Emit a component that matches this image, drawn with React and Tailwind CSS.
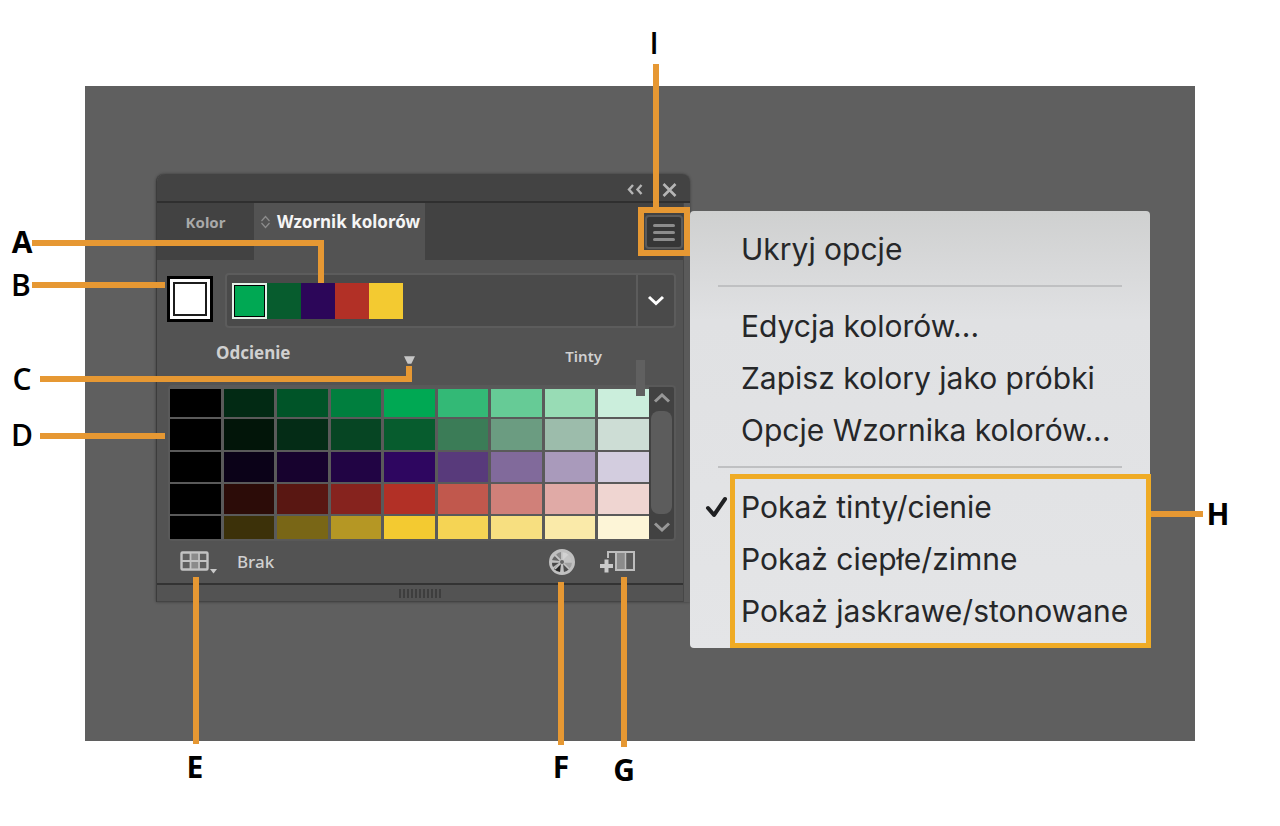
import React, { useState } from 'react';

const harmony = ['#00a853', '#075c2e', '#2c0659', '#b23026', '#f3ca31'];

const shades = [
  ['#000000', '#022a14', '#005428', '#007f3e', '#00a853', '#33b976', '#66cb96', '#98dcb5', '#cbeedc'],
  ['#000000', '#021509', '#042c16', '#064523', '#075c2e', '#3b7c57', '#6b9c81', '#9cbcab', '#cdddd5'],
  ['#000000', '#0b0218', '#17022e', '#210444', '#2e0660', '#583a7b', '#816a9b', '#a99abb', '#d3cddf'],
  ['#000000', '#2c0c08', '#591712', '#86231e', '#b23026', '#c1584d', '#d08079', '#e0aaa6', '#efd5d1'],
  ['#000000', '#3c3109', '#796616', '#b59724', '#f3ca31', '#f5d454', '#f7df80', '#faeaa9', '#fdf5d7'],
];

const menuGroups = [
  ['Ukryj opcje'],
  ['Edycja kolorów...', 'Zapisz kolory jako próbki', 'Opcje Wzornika kolorów...'],
  ['Pokaż tinty/cienie', 'Pokaż ciepłe/zimne', 'Pokaż jaskrawe/stonowane'],
];

const Chevron = ({ up }) => (
  <svg width="18" height="10" viewBox="0 0 18 10" fill="none" stroke="#989898" strokeWidth="3">
    <path d={up ? 'M2 8.5 9 2l7 6.5' : 'M2 1.5 9 8l7-6.5'} />
  </svg>
);

const WheelIcon = () => (
  <svg width="28" height="28" viewBox="0 0 28 28">
    <circle cx="14" cy="14" r="11.5" fill="#b4b4b4" stroke="#c0c0c0" strokeWidth="3" />
    <path d="M14 14 14 4A10 10 0 0 1 21 7Z" fill="#d2d2d2" />
    <path d="M14 14 21 7A10 10 0 0 1 24 14Z" fill="#c4c4c4" />
    <path d="M14 14 24 14A10 10 0 0 1 21 21Z" fill="#a2a2a2" />
    <path d="M15 15 21 21A10 10 0 0 1 16 24Z" fill="#4e4e4e" />
    <path d="M13 15 12 24A10 10 0 0 1 6 21Z" fill="#262626" />
    <path d="M12 14 5 19A10 10 0 0 1 4 14Z" fill="#484848" />
    <path d="M12 13 4 12A10 10 0 0 1 7 8Z" fill="#666" />
    <path d="M13 12 8 7A10 10 0 0 1 13 4Z" fill="#8a8a8a" />
    <path d="M14 4v20M4 14h20M7 7l14 14M21 7 7 21" stroke="#c4c4c4" strokeWidth="1.5" />
    <circle cx="14" cy="14" r="2" fill="#666" />
  </svg>
);

const GridIcon = () => (
  <svg width="38" height="23" viewBox="0 0 38 23">
    <rect x="1.5" y="1.5" width="26" height="17" rx="1" fill="#5f5f5f" stroke="#c3c3c3" strokeWidth="2.4" />
    <rect x="11" y="3" width="7" height="14" fill="#8b8b8b" />
    <path d="M10.5 2v16M19 2v16M2 10h26" stroke="#c3c3c3" strokeWidth="1.8" />
    <path d="M30 18h7l-3.500 4.500z" fill="#c9c9c9" />
  </svg>
);

const SaveGroupIcon = () => (
  <svg width="36" height="24" viewBox="0 0 36 24" fill="none">
    <path d="M8 8V2h8" stroke="#bdbdbd" strokeWidth="2" />
    <rect x="16" y="2" width="18" height="18" fill="#5a5a5a" stroke="#bdbdbd" strokeWidth="2" />
    <rect x="17" y="3" width="8" height="16" fill="#8b8b8b" />
    <path d="M25.5 2v18" stroke="#bdbdbd" strokeWidth="1.5" />
    <path d="M6.500 9.500v13M0 16h13" stroke="#cacaca" strokeWidth="4" />
  </svg>
);

const Panel = () => (
  <section className="w-[534px] shrink-0 rounded-t-lg bg-[#5a5a5a] border-l border-[#3c3c3c] shadow-[0_0_3px_rgba(0,0,0,0.4)]">
    {/* Title bar */}
    <div className="h-[29px] rounded-t-lg bg-[#434343] border-b-2 border-[#2f2f2f] flex items-center justify-end gap-[19px] pr-[13px] pt-1">
      <button aria-label="Zwiń">
        <svg width="17" height="11" viewBox="0 0 17 11" fill="none" stroke="#b5b5b5" strokeWidth="2.4"><path d="M7 1 3 5.500 7 10M15.500 1l-4 4.500 4 4.500" /></svg>
      </button>
      <button aria-label="Zamknij">
        <svg width="15" height="14" viewBox="0 0 15 14" fill="none" stroke="#b5b5b5" strokeWidth="2.6"><path d="m1.500 1 12 12M13.500 1l-12 12" /></svg>
      </button>
    </div>

    <div className="mr-[6px] bg-[#535353] border-r border-[#474747]">
      {/* Tabs */}
      <div role="tablist" className="h-[57px] flex bg-[#424242]">
        <button role="tab" aria-selected="false" className="w-[97px] pb-5 text-[15px] leading-6 font-bold text-[#a9a9a9]">Kolor</button>
        <button role="tab" aria-selected="true" className="w-[171px] bg-[#535353] pb-5 pl-[6px] flex items-center gap-[6px] text-[17px] leading-6 font-bold text-[#f5f5f5] whitespace-nowrap">
          <svg className="shrink-0" width="11" height="14" viewBox="0 0 11 14" fill="none" stroke="#8d8d8d" strokeWidth="1.200"><path d="m1.500 6 4-4.500 4 4.500M1.500 8l4 4.500 4-4.500" /></svg>
          Wzornik kolorów
        </button>
        <button aria-label="Menu panelu" className="ml-auto mt-[12px] w-[38px] h-[34px] rounded border-2 border-[#5b5b5b] bg-[#363636] flex flex-col items-center justify-center gap-1">
          <span className="w-[22px] h-[3px] rounded-sm bg-[#8c8c8c]" />
          <span className="w-[22px] h-[3px] rounded-sm bg-[#8c8c8c]" />
          <span className="w-[22px] h-[3px] rounded-sm bg-[#8c8c8c]" />
        </button>
      </div>

      {/* Base colour and harmony */}
      <div className="pt-[13px] pl-[10px] pr-[7px] flex gap-3">
        <button aria-label="Kolor bazowy" className="mt-[3px] size-[46px] border-[3px] border-black bg-white p-[3px]">
          <span className="block size-full border-2 border-[#1c1c1c] bg-white" />
        </button>
        <div className="flex-1 h-[55px] flex border-2 border-[#5c5c5c] rounded bg-[#4a4a4a]">
          <div className="flex-1 flex items-center pl-[5px]">
            {harmony.map((c, i) => (
              <button
                key={c}
                aria-label={`Kolor ${i + 1}`}
                className={i === 0 ? 'w-[35px] h-9 border-2 border-[#e5f2e8] ring-1 ring-inset ring-black' : 'w-[34px] h-9'}
                style={{ backgroundColor: c }}
              />
            ))}
          </div>
          <button aria-label="Reguły harmonii" className="w-[38px] border-l-2 border-[#5c5c5c] flex items-center justify-center">
            <svg width="18" height="11" viewBox="0 0 18 11" fill="none" stroke="#fff" strokeWidth="3"><path d="m2 2 7 6.500L16 2" /></svg>
          </button>
        </div>
      </div>

      {/* Range labels */}
      <div className="relative h-[57px] pl-[59px] pr-[81px] pt-[13px] flex items-start text-[#d0d0d0]">
        <span className="w-[188px] text-[17px] leading-6 font-bold">Odcienie</span>
        <svg className="mt-[15px]" width="11" height="8" viewBox="0 0 12 8"><path d="M0 0h12L8 8H4z" fill="#c6c6c6" /></svg>
        <span className="ml-auto mt-[5px] text-[15px] leading-5 font-semibold">Tinty</span>
        <span className="absolute z-10 left-[479px] top-[32px] w-[9px] h-[36px] bg-[#606060]" />
      </div>

      {/* Shades and tints */}
      <div className="ml-[11px] mr-[7px] flex rounded border-2 border-[#595959] bg-[#424242]">
        <div className="flex-1 grid grid-cols-9 grid-rows-[28px_31px_30px_30px_23px] gap-x-[3px] gap-y-[2px] pt-[2px] bg-[#5a5a5a]">
          {shades.flat().map((c, i) => (
            <button key={i} aria-label={`Próbka ${c}`} style={{ backgroundColor: c }} />
          ))}
        </div>
        <div className="w-[25px] flex flex-col items-center justify-between pt-[3px] pb-1">
          <button aria-label="W górę" className="h-4"><Chevron up /></button>
          <span className="w-[21px] h-[103px] rounded-lg bg-[#5c5c5c]" />
          <button aria-label="W dół" className="h-4"><Chevron /></button>
        </div>
      </div>

      {/* Footer */}
      <div className="h-[42px] pl-[23px] pr-[47px] flex items-center">
        <button aria-label="Ogranicz do biblioteki próbek"><GridIcon /></button>
        <span className="ml-[19px] text-[17px] leading-6 font-medium text-[#d0d0d0]">Brak</span>
        <button aria-label="Edytuj kolory" className="ml-auto"><WheelIcon /></button>
        <button aria-label="Zapisz grupę kolorów" className="ml-6"><SaveGroupIcon /></button>
      </div>
      <div className="h-[19px] border-t-2 border-[#333] border-b border-b-[#444] flex items-center justify-center gap-[2px]">
        {Array.from({ length: 11 }, (_, i) => (
          <span key={i} className="w-[2px] h-[9px] bg-[#3e3e3e]" />
        ))}
      </div>
    </div>
  </section>
);

const PanelMenu = () => {
  const [checked, setChecked] = useState('Pokaż tinty/cienie');

  return (
    <div role="menu" className="w-[460px] shrink-0 mt-[37px] pt-3 pb-[11px] rounded-sm bg-linear-to-b from-[#cfd0d0] from-0% via-[#e0e1e3] via-25% to-[#e4e5e7] font-[Inter,sans-serif] text-[30px] text-[#262729]">
      {menuGroups.map((group, g) => (
        <div key={g} className={g > 0 ? 'mt-[10px]' : ''}>
          {g > 0 && <hr className="mx-7 mb-[13px] border-t-2 border-[#bfc0c2]" />}
          {group.map((label) => (
            <button key={label} role="menuitem" onClick={() => g === 2 && setChecked(label)} className="w-full h-[52px] pl-[15px] flex items-center whitespace-nowrap">
              <span className="w-9 shrink-0">
                {checked === label && (
                  <svg width="24" height="24" viewBox="0 0 24 24" fill="none" stroke="#1f2022" strokeWidth="4" strokeLinecap="round" strokeLinejoin="round"><path d="m3 13 6 7L20 4" /></svg>
                )}
              </span>
              {label}
            </button>
          ))}
        </div>
      ))}
    </div>
  );
};

// Callouts lie over the whole figure
const lines = [
  'left-[32px] top-[240px] w-[292px] h-[6px]',
  'left-[318px] top-[240px] w-[6px] h-[43px]',
  'left-[32px] top-[282px] w-[133px] h-[6px]',
  'left-[40px] top-[376px] w-[372px] h-[6px]',
  'left-[406px] top-[366px] w-[6px] h-[16px]',
  'left-[40px] top-[433px] w-[125px] h-[6px]',
  'left-[193px] top-[577px] w-[6px] h-[167px]',
  'left-[558px] top-[582px] w-[6px] h-[163px]',
  'left-[621px] top-[577px] w-[6px] h-[170px]',
  'left-[653px] top-[64px] w-[6px] h-[145px]',
  'left-[1150px] top-[511px] w-[53px] h-[6px]',
];

const letters = [
  ['A', 'left-[6px] top-[226px] font-bold'],
  ['B', 'left-[5px] top-[269px] font-semibold'],
  ['C', 'left-[6px] top-[363px] font-semibold'],
  ['D', 'left-[6px] top-[419px] font-semibold'],
  ['E', 'left-[179px] top-[751px] font-bold'],
  ['F', 'left-[545px] top-[751px] font-bold'],
  ['G', 'left-[608px] top-[754px] font-bold'],
  ['H', 'left-[1202px] top-[498px] font-bold'],
  ['I', 'left-[638px] top-[27px] font-semibold'],
];

const Callouts = () => (
  <>
    {lines.map((pos) => (
      <span key={pos} className={`absolute bg-[#e69833] ${pos}`} />
    ))}
    <span className="absolute left-[638px] top-[207px] w-[52px] h-[49px] border-[6px] border-[#e69833] pointer-events-none" />
    <span className="absolute left-[730px] top-[474px] w-[421px] h-[174px] border-[5px] border-[#efab25] pointer-events-none" />
    {letters.map(([letter, pos]) => (
      <span key={letter} className={`absolute w-8 text-center font-['Open_Sans',sans-serif] text-[30px] leading-8 text-black ${pos}`}>{letter}</span>
    ))}
  </>
);

export default function App() {
  return (
    <main className="relative min-h-screen bg-white px-[85px] py-[86px] font-['Noto_Sans',sans-serif]">
      <div className="flex items-start bg-[#5f5f5f] pt-[88px] pl-[71px] pb-[93px]">
        <Panel />
        <PanelMenu />
      </div>
      <Callouts />
    </main>
  );
}
